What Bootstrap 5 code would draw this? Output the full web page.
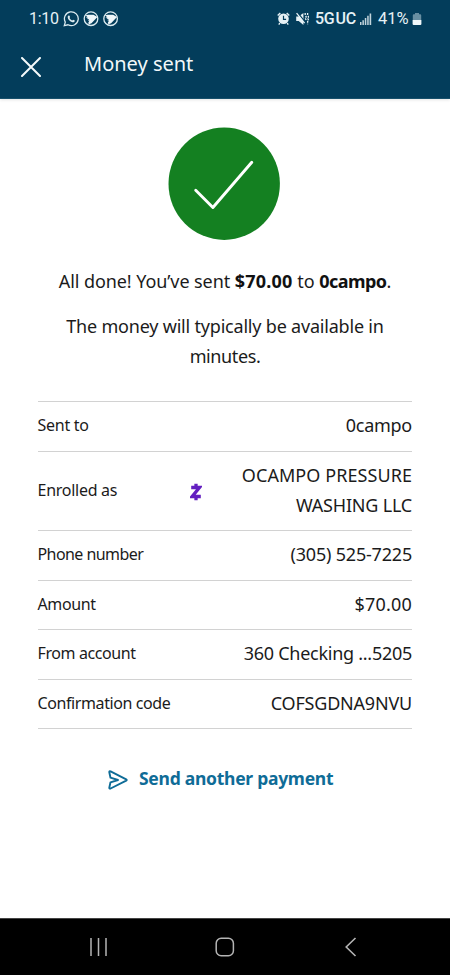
<!DOCTYPE html>
<html lang="en">
<head>
<meta charset="utf-8">
<meta name="viewport" content="width=device-width, initial-scale=1">
<title>Money sent</title>
<link href="https://cdn.jsdelivr.net/npm/bootstrap@5.3.0/dist/css/bootstrap.min.css" rel="stylesheet">
<style>
body{font-family:"Noto Sans","Open Sans",sans-serif;color:#1b1b1b;background:#fff}
svg{display:block;flex:none}
.screen{height:975px;overflow:hidden}
.top-area{background:#033d5b;height:99px;color:#f1f8fa;border-bottom:1px solid #17506b;box-shadow:0 1px 3px #0000001c}
.status-bar{height:38px;padding:0 28px 0 29px;font:400 16px/38px Roboto,sans-serif;color:#e6f1f5}
.clock{width:34px;letter-spacing:-.3px}
.network{width:45px;margin-left:6px;font-weight:500;letter-spacing:-.3px;word-spacing:-2.5px}
.percent{width:34px;margin-left:6px;font-size:16.5px}
.title-bar{height:54px;padding-left:21px}
.page-title{font-size:20px;line-height:30px;margin:0 0 2px 43px;font-weight:400}
.check-disc{margin:28px 0 26px 168px}
.copy{font-size:18px;line-height:30px}
.copy p{margin:0 0 15px}
.copy b{color:#111}
.details{margin:30px 38px 0 37.5px;border-top:1px solid #d2d2d2}
.detail{border-bottom:1px solid #d2d2d2;min-height:49.5px;padding-bottom:2px}
.detail dt{font-size:16px;font-weight:400;line-height:30px}
.detail dd{font-size:18px;line-height:30px;margin:0}
.detail-tall{min-height:79.5px}
.ls-p2{letter-spacing:.2px}
.ls-p1{letter-spacing:.07px}
.ls-n05{letter-spacing:-.08px}
.ls-n2{letter-spacing:-.2px}
.ls-n3{letter-spacing:-.27px}
.ls-n4{letter-spacing:-.4px}
.ls-n55{letter-spacing:-.57px}
.again{color:#0f6c97;font-size:17.5px;line-height:30px;letter-spacing:-.27px;margin:34px 0 0 108px;gap:11px}
.nav-keys{height:57px;background:#000;border-top:1px solid #444;padding:0 93px 0 89px}
</style>
<script src="https://cdn.jsdelivr.net/npm/bootstrap@5.3.0/dist/js/bootstrap.bundle.min.js"></script>
</head>
<body>
<div class="screen d-flex flex-column">
<header class="top-area flex-shrink-0">
<div class="status-bar d-flex align-items-center">
<span class="clock">1:10</span>
<svg width="56" height="18" viewBox="63 10 56 18" fill="none" stroke="#dcebf0" stroke-width="1.3">
<path d="M64.3 25.6 65.3 22.1A6.9 6.9 0 1 1 68 24.8Z"/>
<path d="M68.3 15.8c.8-.8 1.3-.2 1.800 1.300l-.6.9c.7 1.300 1.500 2 2.700 2.500l.9-.8 1.700.9c.2 1.300-1.200 2-2.400 1.700-2.500-.7-4.500-2.900-4.700-5.100 0-.6.2-1.100.6-1.400Z" fill="#dcebf0" stroke="none"/>
<circle cx="91" cy="18.7" r="6.8"/><circle cx="110.6" cy="18.7" r="6.8"/>
<path id="bird" d="M85.200 15.500 88 14.700h5.500l4 2.200-1.300 1.400-4.700 4.900-2.500 1-.8-1.200 1.200-2.400-1.600.2 1.400-1.500-2.400-.2 1.300-1.200-2.300-.6 1.500-.5Z" fill="#f0f7fa" stroke="none"/>
<use href="#bird" x="19.6"/>
</svg>
<svg class="ms-auto" width="32" height="18" viewBox="277 10 32 18" fill="none" stroke="#e6f1f5">
<circle cx="283.5" cy="18.8" r="5.3" fill="#e6f1f5" stroke="none"/>
<path d="m277.7 15.6 2.6-2.6M289.3 15.6 286.7 13M279.8 23l-1 1.6M287.2 23l1 1.6" stroke-width="1.4"/>
<path d="M283.5 15.8v3.500h2.600" stroke="#033d5b" stroke-width="1.2"/>
<path d="M296.2 16.500h2.500l4.700-3.600v12l-4.700-4h-2.500Z" fill="#e6f1f5" stroke="none"/>
<path d="m297.500 12.500 7.500 9.500" stroke="#033d5b" stroke-width="1.300"/><path d="m296.600 13.200 8 10" stroke-width="1.300"/>
<path d="M305.200 13v2.200l1 1.500-1 1.600 1 1.600M307.600 13v2.200l1 1.600-1 1.600 1 1.600-1 1.600v2.600" stroke-width="1.300" stroke-dasharray="2 1"/>
</svg>
<span class="network text-nowrap">5G UC</span>
<svg width="12" height="14" viewBox="0 0 12 14"><path d="M0 10h1.500v3H0zM2.400 8.200h1.500V13H2.400zM4.800 6h1.500v7H4.800zM7.200 3.800h1.500V13H7.200zM9.600 1.500h1.600V13H9.600z" fill="#c3d4dc"/></svg>
<span class="percent">41%</span>
<svg width="10" height="14" viewBox="0 0 10 14"><path d="M3 1h4v1.300h1.200q1 0 1 1V8H.8V3.300q0-1 1-1H3z" fill="#688fa2"/><path d="M.6 8h8.800v4q0 1-1 1H1.600q-1 0-1-1z" fill="#f0f7fa"/></svg>
</div>
<div class="title-bar d-flex align-items-center">
<svg width="20" height="20" viewBox="0 0 20 20" class="mt-1"><path d="m1 1 18 18M19 1 1 19" stroke="#f5fafb" stroke-width="2" stroke-linecap="round"/></svg>
<h1 class="page-title">Money sent</h1>
</div>
</header>
<main class="flex-grow-1">
<svg class="check-disc" width="112" height="113" viewBox="168 127 112 113"><ellipse cx="224.200" cy="183.700" rx="55.700" ry="56.200" fill="#148021"/><path d="M195.700 190.300 212.900 207.500 251.800 162.300" fill="none" stroke="#fff" stroke-width="2.900" stroke-linecap="round" stroke-linejoin="round"/></svg>
<div class="copy text-center">
<p><span class="ls-n05">All done! You’ve sent </span><b class="ls-p2">$70.00</b> to <b class="ls-n55">0campo</b>.</p>
<p class="ls-n2">The money will typically be available in<br><span class="ls-n4">minutes.</span></p>
</div>
<dl class="details">
<div class="detail d-flex justify-content-between align-items-center"><dt class="ls-n3">Sent to</dt><dd class="ls-n3">0campo</dd></div>
<div class="detail detail-tall d-flex align-items-center"><dt class="ls-n3">Enrolled as</dt>
<svg class="ms-auto mt-1" width="12" height="18" viewBox="0 0 12 18"><path d="M1.200 4.500h8.300L2.200 13.500h8.600M6 .8v3M6 14.200v3" fill="none" stroke="#631fc0" stroke-width="3.300"/></svg>
<dd class="text-end ps-4 ms-3"><span class="ls-p1">OCAMPO PRESSURE</span><br><span class="ls-n2">WASHING LLC</span></dd></div>
<div class="detail d-flex justify-content-between align-items-center"><dt class="ls-n55">Phone number</dt><dd class="ls-n2">(305) 525-7225</dd></div>
<div class="detail d-flex justify-content-between align-items-center"><dt class="ls-n4">Amount</dt><dd class="ls-p2">$70.00</dd></div>
<div class="detail d-flex justify-content-between align-items-center"><dt class="ls-n4">From account</dt><dd class="ls-n3">360 Checking ...5205</dd></div>
<div class="detail d-flex justify-content-between align-items-center"><dt class="ls-n4">Confirmation code</dt><dd class="ls-n2">COFSGDNA9NVU</dd></div>
</dl>
<a href="#" class="again d-flex align-items-center fw-bold text-decoration-none"><svg width="20" height="20" viewBox="0 0 20 20" class="mt-1" fill="none" stroke="#0f6c97" stroke-width="1.900" stroke-linejoin="round" stroke-linecap="round"><path d="M1.300 2.300Q1.100.9 2.600 1.400L18.200 9.300Q19.300 10 18.200 10.700L2.600 18.500Q1.100 19 1.300 17.600L2.500 12.300 10 10 2.500 7.700Z"/></svg><span>Send another payment</span></a>
</main>
<footer class="nav-keys d-flex align-items-center flex-shrink-0">
<svg width="19" height="20" viewBox="0 0 19 20"><path d="M2 1v18M9.500 1v18M17 1v18" stroke="#b4b4b4" stroke-width="1.500"/></svg>
<svg class="ms-auto me-auto pe-1" width="24" height="20" viewBox="0 0 20 20"><rect x="1.200" y="1.200" width="17.200" height="17.600" rx="5" fill="none" stroke="#b4b4b4" stroke-width="1.500"/></svg>
<svg width="12" height="20" viewBox="0 0 12 20"><path d="M10.500 1 1.200 10l9.300 9" fill="none" stroke="#b4b4b4" stroke-width="1.600"/></svg>
</footer>
</div>
</body>
</html>
